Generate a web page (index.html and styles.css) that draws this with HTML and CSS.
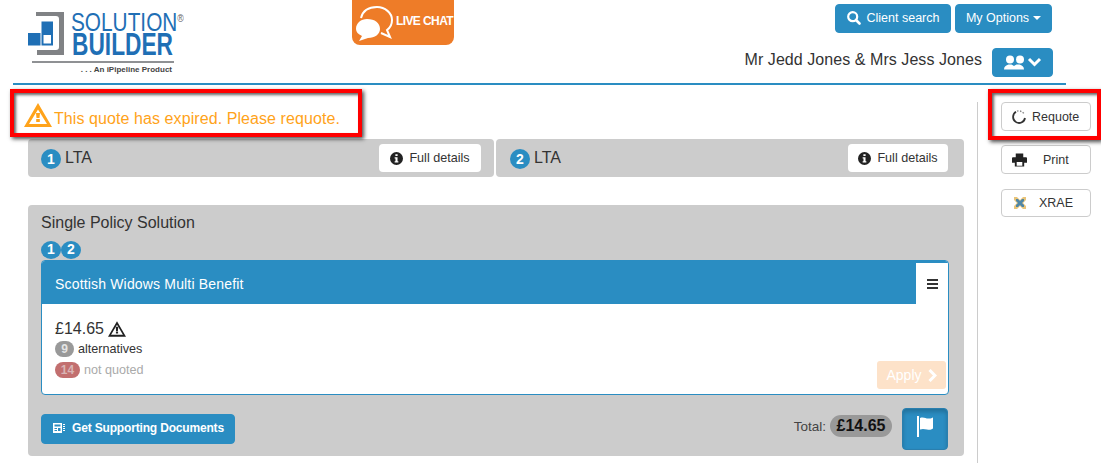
FILE: index.html
```html
<!DOCTYPE html>
<html lang="en">
<head>
<meta charset="utf-8">
<title>Solution Builder</title>
<link rel="stylesheet" href="styles.css">
</head>
<body>
<svg class="defs" width="0" height="0" aria-hidden="true">
  <symbol id="warn" viewBox="0 0 28 24"><path fill-rule="evenodd" d="M14 0 28 24H0ZM14 5.500 4.800 21H23.200Z"/><path d="M12 8.500h4l-.6 6.500h-2.800ZM12.300 16h3.400v3h-3.400Z"/></symbol>
  <symbol id="warn-bold" viewBox="0 0 28 24"><path fill-rule="evenodd" d="M14 0 28 24H0ZM14 6.500 5 21H23Z"/><path d="M12 10h4l-.5 5h-3ZM12.200 16h3.600v3h-3.600Z"/></symbol>
  <symbol id="info" viewBox="0 0 14 14"><path fill-rule="evenodd" d="M7 0a7 7 0 1 1 0 14A7 7 0 0 1 7 0ZM5.800 2.300v2.100h2.400V2.300ZM5 5.600v1.300h.9v3H5v1.400h4V9.900h-.9V5.600Z"/></symbol>
</svg>
<header class="top">
  <div class="logo">
    <svg class="logo-mark" width="38" height="46" viewBox="0 0 38 46">
      <path fill="#808285" d="M8 2h28v43H9v-5h19a3 3 0 0 0 3-3V9a3 3 0 0 0-3-3H8Z"/>
      <path fill="#1f6fb5" d="M13.500 11.500H25V23H13.500ZM0 23h12.500v12.500H0Z"/>
      <path fill="#1f6fb5" fill-rule="evenodd" d="M13.500 23H25v12.500H13.500Zm2 2v8.500H23V25Z"/>
    </svg>
    <div class="logo-words">
      <span class="logo-top">SOLUTION<sup>®</sup></span>
      <span class="logo-main">BUILDER</span>
    </div>
    <div class="logo-rule"></div>
    <div class="logo-tag">. . . An iPipeline Product</div>
  </div>
  <div class="chat">
    <svg width="40" height="36" viewBox="0 0 40 36">
      <path fill="none" stroke="#fff" stroke-width="2" d="M6 12C8 4 15 1 22 1c8 0 15 6 15 13 0 5-2 8-5 10l3 7-9-4"/>
      <path fill="#fff" d="M12 13c8 0 13 4 13 10 0 5-5 9-12 9l-9 3 3-5c-4-2-6-4-6-7 0-6 5-10 11-10Z"/>
    </svg>
    <span>LIVE CHAT</span>
  </div>
  <div class="user">
    <div class="top-btns">
      <button class="btn btn-blue btn-search"><svg width="14" height="14" viewBox="0 0 14 14"><circle cx="5.700" cy="5.700" r="4.500" fill="none" stroke="#fff" stroke-width="2.200"/><path stroke="#fff" stroke-width="2.600" stroke-linecap="round" d="m9 9 3.500 3.500"/></svg>Client search</button>
      <button class="btn btn-blue btn-options">My Options<i class="caret"></i></button>
    </div>
    <div class="client">
      <span class="client-name">Mr Jedd Jones &amp; Mrs Jess Jones</span>
      <button class="btn btn-blue btn-people" aria-label="People">
        <svg width="38" height="15" viewBox="0 0 38 15"><circle cx="6" cy="4.500" r="4" fill="#fff"/><circle cx="16" cy="4.500" r="4" fill="#fff"/><path fill="#fff" d="M0 14.500c0-3 2-4 4.500-5h3c1 .5 1.700.8 2.500 1.400.8-.6 1.500-.9 2.500-1.400h3c2.500 1 4.500 2 4.500 5Z"/><path fill="none" stroke="#fff" stroke-width="3" d="m25 4 5.500 5.500L36 4"/></svg>
      </button>
    </div>
  </div>
</header>
<div class="layout">
  <main class="content">
    <div class="alert">
      <svg class="alert-icon" width="28" height="24"><use href="#warn-bold"/></svg>
      <span>This quote has expired. Please requote.</span>
    </div>
    <div class="lives">
      <div class="life">
        <span class="num">1</span><span class="life-name">LTA</span>
        <button class="btn btn-white btn-details"><svg width="13" height="13"><use href="#info"/></svg>Full details</button>
      </div>
      <div class="life">
        <span class="num">2</span><span class="life-name">LTA</span>
        <button class="btn btn-white btn-details"><svg width="13" height="13"><use href="#info"/></svg>Full details</button>
      </div>
    </div>
    <section class="panel">
      <h2 class="panel-title">Single Policy Solution</h2>
      <div class="tags"><span class="tag">1</span><span class="tag">2</span></div>
      <div class="card">
        <div class="card-head">
          <span class="card-name">Scottish Widows Multi Benefit</span>
          <div class="menu"><i></i><i></i><i></i></div>
        </div>
        <div class="card-body">
          <div class="price">£14.65 <svg width="18" height="16"><use href="#warn"/></svg></div>
          <div class="row"><span class="pill pill-grey">9</span> alternatives</div>
          <div class="row row-muted"><span class="pill pill-red">14</span> not quoted</div>
          <div class="apply">Apply<svg width="9" height="13" viewBox="0 0 9 13"><path fill="none" stroke="#fff" stroke-width="3" d="m1.500 1 5.500 5.500L1.500 12"/></svg></div>
        </div>
      </div>
      <div class="panel-foot">
        <button class="btn btn-blue btn-docs"><svg width="14" height="12" viewBox="0 0 14 12"><path fill="#fff" fill-rule="evenodd" d="M1 1h9v10H1Zm1.500 1.500v2h6v-2Zm0 3.500v1h2.500V6Zm0 2v1h2.500V8ZM6 6v3h2.500V6ZM11 2h2v1h-2Zm0 2h2v1h-2Zm0 2h2v1h-2Zm0 2h2v1h-2Z"/></svg>Get Supporting Documents</button>
        <div class="total">
          <span class="total-label">Total:</span>
          <span class="total-pill">£14.65</span>
          <button class="btn-flag" aria-label="Flag"><svg width="18" height="21" viewBox="0 0 18 21"><path fill="#fff" d="M1 0h2v21H1Z"/><path fill="#fff" d="M4 2c4-1.500 6 1 9 .5 2 0 3-.5 4-1v11c-2 1.500-4 1.500-6 1-2.500-.5-4.500-1-7 0Z"/></svg></button>
        </div>
      </div>
    </section>
  </main>
  <aside class="side">
    <button class="btn btn-side btn-requote"><svg width="14" height="14" viewBox="0 0 14 14"><path fill="none" stroke="#333" stroke-width="1.800" d="M4 1.800A6 6 0 1 0 13 8"/><path stroke="#888" stroke-width="1.400" stroke-dasharray="1.500 1.500" fill="none" d="M5 1.200c2.500-.8 5 0 7 2.500"/></svg>Requote</button>
    <button class="btn btn-side btn-print"><svg width="15" height="14" viewBox="0 0 16 14"><path fill="#222" fill-rule="evenodd" d="M4 0h8v4h3a1 1 0 0 1 1 1v5h-3v4H3v-4H0V5a1 1 0 0 1 1-1h3Zm1 9v4h6V9Z"/></svg><span>Print</span></button>
    <button class="btn btn-side btn-xrae"><svg width="12" height="12" viewBox="0 0 12 12"><path fill="#e8c47a" d="M0 0h3l3 3 3-3h3v3L9 6l3 3v3H9L6 9l-3 3H0V9l3-3-3-3Z"/><path fill="#4f87a8" d="M2 2h2l2 2 2-2h2v2L8 6l2 2v2H8L6 8l-2 2H2V8l2-2-2-2Z"/></svg><span>XRAE</span></button>
  </aside>
</div>
<div class="mark mark-alert"></div>
<div class="mark mark-requote"></div>
</body>
</html>
```
FILE: styles.css
```css
* { box-sizing: border-box; }
html, body { margin: 0; padding: 0; }
body {
  position: relative;
  width: 1101px;
  height: 463px;
  overflow: hidden;
  background: #fff;
  color: #333;
  font-family: "Liberation Sans", Arial, sans-serif;
  font-size: 14px;
}
.defs { position: absolute; }
button { font-family: inherit; margin: 0; }

.top {
  display: flex;
  height: 85px;
  margin: 0 35px 0 13px;
  border-bottom: 2px solid #2a8dc2;
}
.logo {
  width: 324px;
  padding: 13px 0 0 15px;
  display: grid;
  grid-template-columns: 44px 120px;
  grid-template-rows: 48px 2px auto;
  flex: none;
}
.logo-mark { margin-top: -3px; }
.logo-words { display: flex; flex-direction: column; }
.logo-top {
  font-size: 26px;
  line-height: 19px;
  margin-left: -1px;
  color: #1f6fb5;
  white-space: nowrap;
  transform: scaleX(.8);
  transform-origin: left;
}
.logo-top sup { font-size: 11px; color: #666; vertical-align: 9px; line-height: 0; margin-left: 0; letter-spacing: -1px; }
.logo-main {
  font-size: 32px;
  line-height: 24px;
  font-weight: 700;
  color: #1f6fb5;
  white-space: nowrap;
  transform: scaleX(.71);
  transform-origin: left;
}
.logo-rule { grid-column: 1 / 3; grid-row: 2; margin-left: 4px; width: 142px; height: 2px; background: #8f9194; }
.logo-tag { grid-column: 1 / 3; grid-row: 3; width: 144px; text-align: right; font-size: 8px; line-height: 9px; color: #444; font-weight: 700; margin-top: 2px; }

.chat {
  flex: none;
  width: 102px;
  height: 45px;
  margin-left: 15px;
  background: #ee7c28;
  border-radius: 0 0 8px 8px;
  display: flex;
  align-items: flex-start;
  padding: 6px 0 0 3px;
  color: #fff;
  font-size: 12px;
  font-weight: 700;
  letter-spacing: -.600px;
  white-space: nowrap;
}
.chat span { margin: 8px 0 0 1px; }

.user { flex: 1; display: flex; flex-direction: column; align-items: flex-end; padding: 4px 13px 0 0; }
.top-btns { display: flex; gap: 4px; margin-right: 1px; }
.client { display: flex; align-items: center; margin-top: 15px; gap: 10px; }
.client-name { font-size: 16px; letter-spacing: .06px; padding-bottom: 5px; }

.btn {
  display: inline-flex;
  align-items: center;
  justify-content: center;
  border-radius: 4px;
  border: 1px solid transparent;
  font-size: 12.500px;
  padding: 0;
  white-space: nowrap;
}
.btn-blue { background: #2a8dc2; border-color: #2a8dc2; color: #fff; }
.btn-search { width: 116px; height: 29px; gap: 6px; padding-bottom: 2px; }
.btn-options { width: 97px; height: 29px; padding-bottom: 2px; }
.caret {
  width: 0; height: 0;
  margin-left: 4px;
  border-left: 4px solid transparent;
  border-right: 4px solid transparent;
  border-top: 4px solid #fff;
}
.btn-people { width: 61px; height: 29px; }
.btn-white { background: #fff; color: #333; }

.layout { display: flex; padding-left: 28px; }
.content { width: 936px; flex: none; }

.alert {
  display: flex;
  align-items: flex-end;
  height: 54px;
  margin-left: -4px;
  padding-bottom: 11px;
  color: #ffa31a;
  font-size: 16px;
  letter-spacing: .08px;
}
.alert-icon { fill: #ffa31a; margin-right: 2px; margin-bottom: 1px; }

.lives { display: flex; gap: 2px; }
.life {
  height: 38px;
  background: #ccc;
  border-radius: 4px;
  display: flex;
  align-items: center;
  font-size: 16px;
}
.life:first-child { width: 466px; padding: 0 13px; }
.life:last-child { width: 468px; padding: 0 16px 0 14px; }
.num {
  width: 20px; height: 20px;
  border-radius: 50%;
  background: #2a8dc2;
  color: #fff;
  font-weight: 700;
  font-size: 14px;
  display: flex;
  align-items: center;
  justify-content: center;
  margin-right: 4px;
  margin-top: 1px;
}
.life-name { flex: 1; }
.btn-details { width: 102px; height: 28px; gap: 6px; font-size: 12.600px; border: 0; }
.life:last-child .btn-details { width: 100px; }
.btn-details svg { fill: #222; }

.panel {
  margin-top: 28px;
  height: 251px;
  background: #ccc;
  border-radius: 4px;
  padding: 9px 15px 0 13px;
}
.panel-title { margin: 0; font-size: 16px; font-weight: 400; line-height: 18px; }
.tags { display: flex; margin-top: 9px; height: 18px; }
.tag {
  width: 20px; height: 18px;
  border-radius: 50%;
  background: #2a8dc2;
  color: #fff;
  font-weight: 700;
  font-size: 14px;
  display: flex;
  align-items: center;
  justify-content: center;
  padding-bottom: 2px;
}
.card {
  margin-top: 1px;
  height: 135px;
  background: #fff;
  border: 1px solid #2a8dc2;
  border-radius: 4px;
  overflow: hidden;
}
.card-head {
  height: 43px;
  background: #2a8dc2;
  color: #fff;
  display: flex;
  align-items: center;
  justify-content: space-between;
  padding-left: 13px;
  font-size: 14px;
  letter-spacing: .17px;
}
.card-name { margin-top: 2px; }
.menu {
  width: 32px; height: 41px;
  margin-top: 2px;
  align-self: flex-start;
  background: #fff;
  display: flex;
  flex-direction: column;
  justify-content: center;
  align-items: center;
  gap: 2px;
}
.menu i { width: 11px; height: 2px; background: #333; }
.card-body { position: relative; height: 90px; padding: 15px 13px 0; }
.price { font-size: 16px; line-height: 20px; display: flex; align-items: center; gap: 4px; }
.price svg { fill: #222; }
.row { font-size: 12.600px; line-height: 16px; margin-top: 2px; display: flex; align-items: center; gap: 4px; }
.row-muted { margin-top: 5px; color: #aaa; }
.pill {
  height: 16px;
  min-width: 19px;
  padding: 0 4px;
  border-radius: 8px;
  color: #e4e4e4;
  font-weight: 700;
  font-size: 12px;
  display: flex;
  align-items: center;
  justify-content: center;
}
.pill-grey { background: #999; }
.pill-red { background: #c26f6f; min-width: 25px; color: #d9b5b5; }
.apply {
  position: absolute;
  right: 2px;
  bottom: 5px;
  width: 69px;
  height: 28px;
  background: #fde2c9;
  border-radius: 3px;
  color: #fff;
  font-size: 14px;
  display: flex;
  align-items: center;
  justify-content: center;
  gap: 6px;
}

.panel-foot { display: flex; justify-content: space-between; align-items: flex-start; margin-top: 13px; }
.btn-docs { width: 194px; height: 30px; margin-top: 6px; gap: 6px; font-size: 12px; font-weight: 700; letter-spacing: -.17px; padding-bottom: 3px; }
.total { display: flex; align-items: flex-start; }
.total-label { font-size: 13.500px; line-height: 16px; margin-top: 11px; margin-right: 4px; color: #444; }
.total-pill {
  width: 62px; height: 22px;
  margin-top: 7px;
  margin-right: 10px;
  border-radius: 11px;
  background: #999;
  color: #111;
  font-weight: 700;
  font-size: 16px;
  display: flex;
  align-items: center;
  justify-content: center;
}
.btn-flag {
  width: 46px; height: 42px;
  margin-right: 1px;
  border: 1px solid #2a7fae;
  border-radius: 4px;
  background: #2a8dc2;
  box-shadow: inset 0 3px 4px rgba(0, 0, 0, .2);
  padding: 0 0 5px;
  display: flex;
  align-items: center;
  justify-content: center;
}

.side {
  margin-left: 13px;
  margin-top: 17px;
  width: 124px;
  height: 361px;
  border-left: 1px solid #ccc;
  padding-left: 23px;
  display: flex;
  flex-direction: column;
  gap: 14px;
}
.btn-side {
  width: 90px;
  height: 29px;
  background: #fff;
  border-color: #ccc;
  color: #333;
  justify-content: flex-start;
}
.btn-side svg { flex: none; }
.btn-requote { gap: 6px; padding-left: 10px; }
.btn-print { gap: 16px; padding-left: 10px; }
.btn-xrae { gap: 13px; padding-left: 12px; height: 28px; margin-top: 1px; }

.mark {
  position: absolute;
  border: 4px solid #f00;
  box-shadow: 2px 2px 4px rgba(0, 0, 0, .7), inset 2px 2px 3px rgba(0, 0, 0, .6);
  pointer-events: none;
}
.mark-alert { left: 10px; top: 89px; width: 352px; height: 48px; }
.mark-requote { left: 988px; top: 89px; width: 113px; height: 51px; }
```
